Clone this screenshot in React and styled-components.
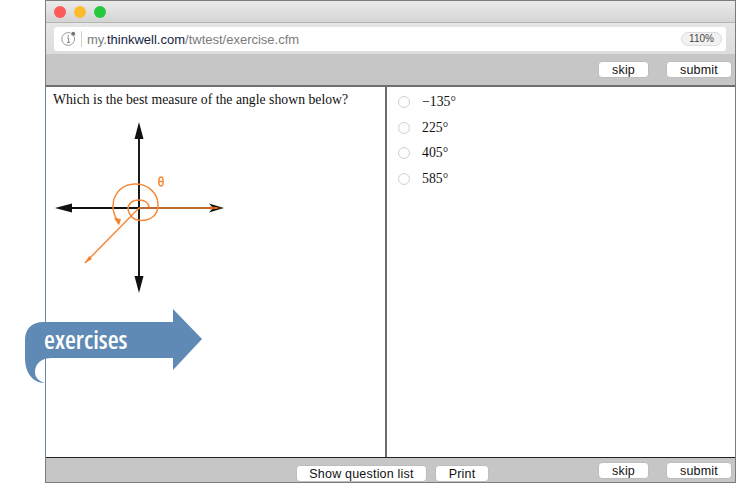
import React from 'react'
import styled, { createGlobalStyle } from 'styled-components'

const GlobalStyle = createGlobalStyle`
  html, body {
    margin: 0;
    padding: 0;
    height: 485px;
    background: #fff;
    overflow: hidden;
  }
`
const Page = styled.div`
  position: relative;
  width: 743px;
  height: 485px;
  padding-left: 45px;
  box-sizing: border-box;
`
const Browser = styled.div`
  width: 691px;
  height: 483px;
  box-sizing: border-box;
  border: 1px solid #7c7c7c;
  border-bottom: 0;
  display: flex;
  flex-direction: column;
`
const TitleBar = styled.div`
  height: 22px;
  flex: none;
  display: flex;
  align-items: center;
  gap: 8px;
  padding-left: 8px;
  box-sizing: border-box;
  background: linear-gradient(#ebebeb, #d4d4d4);
  border-bottom: 1px solid #b4b4b4;
`
const Light = styled.span`
  width: 12px;
  height: 12px;
  border-radius: 50%;
  background: ${(p) => p.$color};
`
const AddressRow = styled.div`
  height: 31px;
  flex: none;
  box-sizing: border-box;
  padding: 4px 9px 3px 8px;
  background: linear-gradient(#e6e6e6, #dcdcdc);
`
const AddressField = styled.div`
  height: 24px;
  display: flex;
  align-items: center;
  background: #fff;
  border-radius: 3px;
  padding: 0 4px 0 7px;
  font-family: 'Liberation Sans', Arial, sans-serif;
  font-size: 13px;
  color: #7b7b7b;
`
const InfoIcon = styled.svg`
  flex: none;
  width: 16px;
  height: 16px;
`
const Separator = styled.span`
  width: 1px;
  height: 16px;
  background: #cfcfcf;
  margin: 0 5px 0 4px;
`
const Domain = styled.span`
  color: #15233f;
`
const Zoom = styled.span`
  margin-left: auto;
  width: 41px;
  height: 14px;
  box-sizing: border-box;
  border: 1px solid #dcdcdc;
  border-radius: 7px;
  background: #f1f1f1;
  color: #444;
  font-size: 10px;
  line-height: 12px;
  text-align: center;
`
const Toolbar = styled.div`
  height: 33px;
  flex: none;
  box-sizing: border-box;
  display: flex;
  justify-content: flex-end;
  gap: 17px;
  padding: 7px 3px 0 0;
  background: #c6c6c6;
  border-bottom: 2px solid #6f6f6f;
`
const Button = styled.button`
  width: ${(p) => p.$width}px;
  height: 17px;
  padding: 0;
  box-sizing: border-box;
  background: #fff;
  border: 1px solid #bdbdbd;
  border-radius: 4px;
  color: #111;
  font-family: 'Liberation Sans', Arial, sans-serif;
  font-size: 12.5px;
  line-height: 14px;
  letter-spacing: 0.2px;
`
const Content = styled.div`
  flex: 1;
  min-height: 0;
  display: flex;
  margin-left: -1px;
  border-left: 1px solid #6a86a8;
  background: #fff;
  font-family: 'Liberation Serif', 'Times New Roman', serif;
  color: #111;
`
const QuestionPane = styled.div`
  width: 341px;
  flex: none;
  box-sizing: border-box;
  padding: 5px 0 0 7px;
  border-right: 2px solid #6b6b6b;
`
const Question = styled.div`
  font-size: 13.75px;
  line-height: 16px;
`
const Figure = styled.svg`
  display: block;
  width: 190px;
  height: 185px;
  margin: 7px 0 0 -8px;
`
const AnswerPane = styled.div`
  flex: 1;
  padding: 2px 0 0 11px;
`
const Answer = styled.div`
  height: 25.7px;
  display: flex;
  align-items: center;
  gap: 12px;
  font-size: 13.75px;
`
const Radio = styled.span`
  width: 12px;
  height: 12px;
  box-sizing: border-box;
  border: 1px solid #d2d2d2;
  border-radius: 50%;
  background: #fdfdfd;
`
const Footer = styled.div`
  height: 26px;
  flex: none;
  box-sizing: border-box;
  display: flex;
  background: #c6c6c6;
  border-top: 1px solid #222;
  border-bottom: 1px solid #7c7c7c;
`
const CenterActions = styled.div`
  display: flex;
  gap: 8px;
  padding: 7px 0 0 250px;
`
const RightActions = styled.div`
  margin-left: auto;
  display: flex;
  gap: 17px;
  padding: 4px 3px 0 0;
`
const Banner = styled.div`
  position: absolute;
  left: 25px;
  top: 308px;
  width: 177px;
  height: 76px;
`
const BannerShape = styled.svg`
  display: block;
  width: 177px;
  height: 76px;
`
const BannerLabel = styled.span`
  position: absolute;
  left: 19px;
  top: 14px;
  color: #fff;
  font-family: 'Open Sans', 'Liberation Sans', sans-serif;
  font-stretch: condensed;
  font-size: 25px;
  font-weight: 600;
  line-height: 34px;
`

const answers = ['−135°', '225°', '405°', '585°']

const AngleFigure = () => (
  <Figure viewBox="0 0 190 185">
    <g stroke="#111" strokeWidth="1.9" fill="none">
      <line x1="94" y1="20" x2="94" y2="168" />
      <line x1="20" y1="93" x2="170" y2="93" />
    </g>
    <g fill="#111">
      <path d="M94 7 L98.5 24 L89.5 24 Z" />
      <path d="M94 178 L98.5 161 L89.5 161 Z" />
      <path d="M10 93 L27 88.5 L27 97.5 Z" />
      <path d="M179 93 L164 88.5 L168 93 L164 97.5 Z" />
    </g>
    <g stroke="#f6893a" fill="none" strokeWidth="1.5">
      <line x1="94" y1="93" x2="172" y2="93" />
      <line x1="94" y1="93" x2="40" y2="148" />
      <path d="M104 92 C103 87 99 85 94 85 C87 85 83 89 83 94 C84 101 89 105.5 96 105.5 C106 105.5 113 100 113 90 C113 77 102 69 90 69 C77 69 68 79 68 91 C68 97 70 102 73 106" />
      <ellipse cx="116" cy="66.5" rx="2.2" ry="4.6" />
      <line x1="114" y1="66.5" x2="118" y2="66.5" />
    </g>
    <path d="M69 103 L76 104 L74 110.5 Z" fill="#f5822a" />
    <path d="M165 91.5 L177 93 L165 94.5 Z" fill="#e8641a" />
    <path d="M40 148 L44 141 L47 144 Z" fill="#f5822a" />
  </Figure>
)

const App = () => (
  <Page>
    <GlobalStyle />
    <Browser>
      <TitleBar>
        <Light $color="#fc5b57" />
        <Light $color="#fdbc2e" />
        <Light $color="#27c840" />
      </TitleBar>
      <AddressRow>
        <AddressField>
          <InfoIcon viewBox="0 0 16 16">
            <circle cx="7.2" cy="8" r="6.4" fill="none" stroke="#8f8f8f" strokeWidth="0.9" />
            <circle cx="7.2" cy="5" r="0.8" fill="#777" />
            <path d="M6.2 7h1.4v4.2M6 11.4h3.2" fill="none" stroke="#777" strokeWidth="0.9" />
            <circle cx="12.2" cy="2.8" r="2.5" fill="#777" stroke="#fff" />
          </InfoIcon>
          <Separator />
          <span>
            my.<Domain>thinkwell.com</Domain>/twtest/exercise.cfm
          </span>
          <Zoom>110%</Zoom>
        </AddressField>
      </AddressRow>
      <Toolbar>
        <Button $width={51}>skip</Button>
        <Button $width={66}>submit</Button>
      </Toolbar>
      <Content>
        <QuestionPane>
          <Question>Which is the best measure of the angle shown below?</Question>
          <AngleFigure />
        </QuestionPane>
        <AnswerPane>
          {answers.map((a) => (
            <Answer key={a}>
              <Radio />
              <span>{a}</span>
            </Answer>
          ))}
        </AnswerPane>
      </Content>
      <Footer>
        <CenterActions>
          <Button $width={131}>Show question list</Button>
          <Button $width={54}>Print</Button>
        </CenterActions>
        <RightActions>
          <Button $width={51}>skip</Button>
          <Button $width={66}>submit</Button>
        </RightActions>
      </Footer>
    </Browser>
    <Banner>
      <BannerShape viewBox="0 0 177 76">
        <path
          d="M148 1 L177 31 L148 62 L148 50 L27 50 C16 50 10 56 10 64 C10 70 14 73 20 75 C7 75 0 64 0 50 L0 32 C0 20 8 14 18 14 L148 14 Z"
          fill="#5f8ab5"
        />
      </BannerShape>
      <BannerLabel>exercises</BannerLabel>
    </Banner>
  </Page>
)

export default App
